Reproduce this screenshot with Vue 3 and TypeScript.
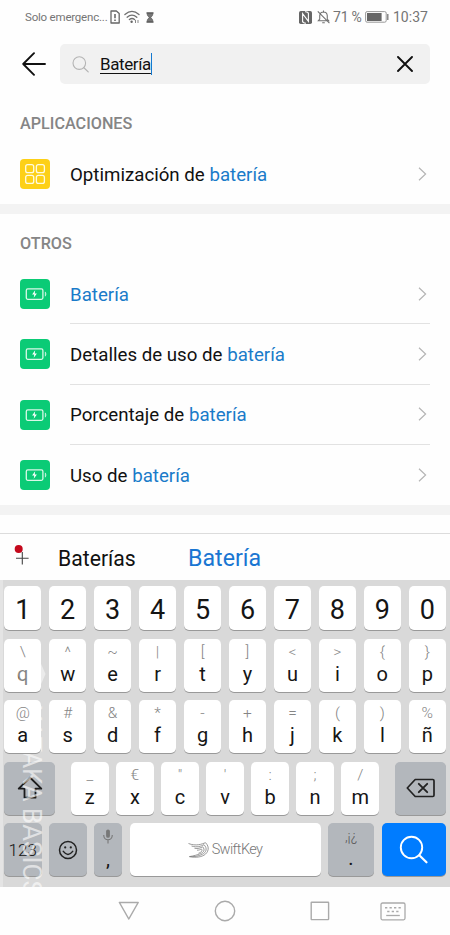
<script setup lang="ts">
interface Result {
  lead: string
  match: string
}
interface Key {
  hint: string
  label: string
}

const others: Result[] = [
  { lead: '', match: 'Batería' },
  { lead: 'Detalles de uso de ', match: 'batería' },
  { lead: 'Porcentaje de ', match: 'batería' },
  { lead: 'Uso de ', match: 'batería' },
]

const digits: string[] = '1234567890'.split('')

function makeRow(hints: string, labels: string): Key[] {
  return labels.split('').map((label, i) => ({ hint: hints[i], label }))
}

const topRow = makeRow('\\^~|[]<>{}', 'qwertyuiop')
const homeRow = makeRow('@#&*-+=()%', 'asdfghjklñ')
const bottomRow = makeRow('_€"\':;/', 'zxcvbnm')
</script>

<template>
  <div class="screen">
    <header class="status">
      <span class="carrier">Solo emergenc...</span>
      <svg class="sim" width="10" height="14" viewBox="0 0 10 14">
        <path d="M1 1h5.4L9.2 3.6V13H1z" fill="none" stroke="#666" stroke-width="1.3" stroke-linejoin="round" />
        <path d="M5 4v4.2M5 9.6v1.5" stroke="#555" stroke-width="1.4" />
      </svg>
      <svg class="wifi" width="16" height="14" viewBox="0 0 16 14">
        <g fill="none" stroke="#707070" stroke-width="1.3" stroke-linecap="round">
          <path d="M.9 4.6Q8-1.8 15 4.6M3.1 7.2Q8 3 12.8 7.2M5.4 9.5Q8 7.5 10.6 9.5" />
        </g>
        <circle cx="7.6" cy="11.7" r="1.2" fill="#666" />
        <path d="M11.5 10v3M14 10v3" stroke="#888" stroke-width="1" />
      </svg>
      <svg class="glass" width="8" height="11" viewBox="0 0 8 11">
        <path d="M.5 1h7M.5 10h7" stroke="#555" stroke-width="1.4" />
        <path d="M1.3 1.5h5.4v1.6L4.8 5.5l1.9 2.4v1.6H1.3V7.9l1.9-2.4-1.9-2.4z" fill="#777" stroke="#555" stroke-width=".7" />
      </svg>
      <span class="spacer"></span>
      <svg class="nfc" width="13" height="13" viewBox="0 0 13 13">
        <rect width="13" height="13" rx="1.8" fill="#666" />
        <path d="M3.6 11V2.600l5.800 7.800V2M6 .8q3.400-.2 3.400 2M3.600 10q0 2.200 3.400 2.200" fill="none" stroke="#fff" stroke-width="1.1" />
      </svg>
      <svg class="bell" width="13" height="14" viewBox="0 0 12 13">
        <g fill="none" stroke="#707070" stroke-width="1">
          <path d="M1.2 10h9.6L9.5 8.4V5.2Q9.2 2 6 1.9 2.8 2 2.5 5.2v3.2zM6 .5v1.3M4.8 11.8h2.4M.7 1.2l10.8 11" />
        </g>
      </svg>
      <span class="pct">71 %</span>
      <svg class="cell" width="24" height="12" viewBox="0 0 24 12">
        <rect x=".6" y=".6" width="20.6" height="10.6" rx="1.5" fill="none" stroke="#999" />
        <rect x="2" y="2" width="14.6" height="8" fill="#666" />
        <path d="M22.8 3v6" stroke="#777" stroke-width="1.3" />
      </svg>
      <span class="clock">10:37</span>
    </header>

    <div class="searchbar">
      <svg class="back" width="24" height="24" viewBox="0 0 24 24">
        <path d="M23 12H1.2M12 1.2 1.2 12 12 22.8" fill="none" stroke="#111" stroke-width="1.9" stroke-linecap="round" stroke-linejoin="round" />
      </svg>
      <div class="field">
        <svg class="lens" width="17" height="17" viewBox="0 0 17 17">
          <circle cx="7.3" cy="7.1" r="6.3" fill="none" stroke="#b4b4b4" stroke-width="1.1" />
          <path d="m11.9 11.7 4.3 4.2" stroke="#b4b4b4" stroke-width="1.2" stroke-linecap="round" />
        </svg>
        <span class="query">Batería</span>
        <span class="caret"></span>
        <span class="spacer"></span>
        <svg width="16" height="16" viewBox="0 0 16 16">
          <path d="m1 1 14 14M15 1 1 15" stroke="#111" stroke-width="1.9" stroke-linecap="round" />
        </svg>
      </div>
    </div>

    <main class="results">
      <section class="group apps">
        <h2>APLICACIONES</h2>
        <div class="item">
          <svg class="badge" width="30" height="30" viewBox="0 0 30 30">
            <rect width="30" height="30" rx="4" fill="#fdd017" />
            <g fill="none" stroke="#fffbe0" stroke-width="1.3">
              <rect x="5.7" y="5.7" width="8" height="8" rx="2" />
              <rect x="16.4" y="5.7" width="8" height="8" rx="2" />
              <rect x="5.7" y="16.4" width="8" height="8" rx="2" />
              <rect x="16.4" y="16.4" width="8" height="8" rx="2" />
            </g>
          </svg>
          <div class="row">
            <span class="name">Optimización de <b>batería</b></span>
            <svg width="9" height="14" viewBox="0 0 9 14"><path d="m1 .8 6.6 6.2L1 13.2" fill="none" stroke="#b5b5b5" stroke-width="1.2" /></svg>
          </div>
        </div>
      </section>
      <div class="band"></div>
      <section class="group">
        <h2>OTROS</h2>
        <div v-for="(item, i) in others" :key="i" class="item">
          <svg class="badge" width="30" height="30" viewBox="0 0 30 30">
            <rect width="30" height="30" rx="4" fill="#0bcb76" />
            <rect x="6.3" y="9.9" width="16.6" height="10.4" rx="1.5" fill="none" stroke="#d9f8e8" stroke-width="1.3" />
            <path d="M25.3 12.9q1.5 2.1 0 4.3z" fill="#d9f8e8" stroke="#d9f8e8" stroke-width=".6" />
            <path d="m15.2 11.3-3.1 4.3h2.2l-.6 3.2 3.2-4.4h-2.2z" fill="#fff" />
          </svg>
          <div class="row">
            <span class="name">{{ item.lead }}<b>{{ item.match }}</b></span>
            <svg width="9" height="14" viewBox="0 0 9 14"><path d="m1 .8 6.6 6.2L1 13.2" fill="none" stroke="#b5b5b5" stroke-width="1.2" /></svg>
          </div>
        </div>
      </section>
      <div class="band"></div>
    </main>

    <div class="suggestions">
      <svg class="plus" width="18" height="22" viewBox="0 0 18 22">
        <path d="M2 14.2h12.6M8.3 8v12.4" stroke="#444" stroke-width="1.1" />
        <circle cx="4.7" cy="5" r="4" fill="#c4081c" />
      </svg>
      <span class="alt">Baterías</span>
      <span class="main">Batería</span>
    </div>

    <div class="keyboard">
      <div class="keys digits">
        <div v-for="d in digits" :key="d" class="key digit">{{ d }}</div>
      </div>
      <div class="keys">
        <div v-for="k in topRow" :key="k.label" class="key">
          <span class="hint">{{ k.hint }}</span><span class="label">{{ k.label }}</span>
        </div>
      </div>
      <div class="keys home">
        <div v-for="k in homeRow" :key="k.label" class="key">
          <span class="hint">{{ k.hint }}</span><span class="label">{{ k.label }}</span>
        </div>
      </div>
      <div class="keys split">
        <div class="key dark wide">
          <svg width="26" height="24" viewBox="0 0 26 24">
            <path d="M13 1.5 1.7 12.7h5.8v9h11v-9h5.8z" fill="none" stroke="#1c1c1c" stroke-width="1.8" stroke-linejoin="round" />
          </svg>
        </div>
        <div class="letters">
          <div v-for="k in bottomRow" :key="k.label" class="key">
            <span class="hint">{{ k.hint }}</span><span class="label">{{ k.label }}</span>
          </div>
        </div>
        <div class="key dark wide">
          <svg width="30" height="20" viewBox="0 0 30 20">
            <path d="M9.2 1.5h17.6q1.2 0 1.2 1.2v14.6q0 1.2-1.2 1.2H9.2L1.3 10z" fill="none" stroke="#222" stroke-width="1.7" stroke-linejoin="round" />
            <path d="m12.8 5.8 8.4 8.4M21.2 5.8l-8.4 8.4" stroke="#222" stroke-width="1.9" stroke-linecap="round" />
          </svg>
        </div>
      </div>
      <div class="keys last">
        <div class="key dark mode">123</div>
        <div class="key dark">
          <svg width="20" height="20" viewBox="0 0 20 20">
            <g fill="none" stroke="#222" stroke-width="1.5" stroke-linecap="round">
              <circle cx="10" cy="10" r="8.5" />
              <path d="M5.3 11.4q4.7 6 9.4 0" />
            </g>
            <circle cx="7.2" cy="7.4" r="1.1" fill="#222" /><circle cx="12.8" cy="7.4" r="1.1" fill="#222" />
          </svg>
        </div>
        <div class="key dark comma">
          <svg width="10" height="15" viewBox="0 0 10 15">
            <rect x="3.1" y=".4" width="3.8" height="8.4" rx="1.9" fill="#777" />
            <path d="M.8 6v1q.5 3.6 4.2 3.8Q8.7 10.6 9.2 7V6M5 11v3.5" fill="none" stroke="#777" stroke-width="1.1" />
          </svg>
          <span class="label">,</span>
        </div>
        <div class="key space">
          <svg width="21" height="16" viewBox="0 0 21 16">
            <g fill="none" stroke="#808080" stroke-width=".8">
              <path d="M.5 1.500C8 4.500 14 2 17.500.7 22 5 20.500 10.500 16 13.200 11.500 15.700 6 15.500 1.500 14.600" />
              <path d="M3.500 4C9 5.800 13 4.200 16 2.700 19.800 6.500 18 10.500 14.500 12.200 10.500 14.400 6 14.800 1.500 14.600" />
              <path d="M6.500 6.300C10 7 12.500 5.900 14.700 4.800 17.500 8 15.500 10.500 12.500 11.600 9 13 6 13.800 1.500 14.600" />
              <path d="M9 8.200c1.800.1 3.200-.5 4.400-1.200C15 9 13 10.300 10.500 11.200" />
            </g>
          </svg>
          <span class="brand">SwiftKey</span>
        </div>
        <div class="key dark dot"><span class="hint">,¡¿</span><span class="label">.</span></div>
        <div class="key search">
          <svg width="30" height="30" viewBox="0 0 30 30">
            <circle cx="12.5" cy="12.5" r="10.7" fill="none" stroke="#fff" stroke-width="1.9" />
            <path d="m20.3 20.3 7.2 7" stroke="#fff" stroke-width="2.2" stroke-linecap="round" />
          </svg>
        </div>
      </div>
      <svg class="mark" width="29" height="36" viewBox="0 0 29 36">
        <path d="M5 1h16l7.500 17L21 35H5L.5 18z" fill="#fff" fill-opacity=".48" />
      </svg>
      <div class="watermark">XATAKA BASICS</div>
    </div>

    <nav class="navbar">
      <svg width="22" height="20" viewBox="0 0 22 20"><path d="M1.4 1.5h18.8L10.8 18z" fill="none" stroke="#aaa" stroke-width="1.5" stroke-linejoin="round" /></svg>
      <svg width="22" height="22" viewBox="0 0 22 22"><circle cx="11" cy="11" r="9.7" fill="none" stroke="#aaa" stroke-width="1.4" /></svg>
      <svg width="20" height="20" viewBox="0 0 20 20"><rect x="1.2" y="1.2" width="17.4" height="17.4" rx=".5" fill="none" stroke="#aaa" stroke-width="1.4" /></svg>
      <svg width="26" height="19" viewBox="0 0 26 19">
        <rect x="1" y="1" width="24" height="16.8" rx="1.5" fill="none" stroke="#aaa" stroke-width="1.3" />
        <path d="M5 5.7h16M7.2 9.5h12" stroke="#aaa" stroke-width="1.6" stroke-dasharray="2.3 2.2" />
        <path d="M6.2 13.5h13.6" stroke="#aaa" stroke-width="1.3" />
      </svg>
    </nav>
  </div>
</template>

<style>
body {
  margin: 0;
  background: #fff;
}
</style>

<style scoped>
.screen {
  width: 450px;
  height: 935px;
  display: flex;
  flex-direction: column;
  overflow: hidden;
  background: #fefefe;
  color: #111;
  font-family: Roboto, "Liberation Sans", sans-serif;
}
svg {
  display: block;
  flex: none;
}
.spacer {
  flex: 1;
}
.status {
  height: 34px;
  box-sizing: border-box;
  padding: 0 22px 0 25px;
  display: flex;
  align-items: center;
  color: #757575;
  font-size: 11.5px;
  white-space: nowrap;
}
.carrier {
  width: 85px;
  letter-spacing: -0.2px;
}
.wifi {
  margin-left: 4px;
}
.glass {
  margin-left: 6px;
}
.bell {
  margin: 0 3px 0 5px;
}
.pct,
.clock {
  font-size: 14px;
}
.pct {
  width: 32px;
  letter-spacing: -0.2px;
}
.clock {
  width: 35px;
  margin-left: 4px;
}
.searchbar {
  height: 60px;
  box-sizing: border-box;
  display: flex;
  align-items: center;
  padding: 0 20px 0 22px;
}
.field {
  flex: 1;
  height: 40px;
  box-sizing: border-box;
  margin-left: 14px;
  padding: 0 17px 0 12px;
  display: flex;
  align-items: center;
  border-radius: 5px;
  background: #f1f1f1;
}
.query {
  margin-left: 11px;
  font-size: 17px;
  letter-spacing: -0.4px;
  line-height: 22px;
  text-decoration: underline;
  text-decoration-thickness: 1px;
  text-underline-offset: 3px;
}
.caret {
  width: 1px;
  height: 22px;
  background: #1479d0;
}
.results {
  height: 439px;
}
.group {
  height: 291px;
}
.apps {
  height: 110px;
}
h2 {
  height: 50px;
  margin: 0;
  padding: 20px 0 0 20px;
  box-sizing: border-box;
  color: #858585;
  font-size: 16.2px;
  font-weight: 500;
  line-height: 20px;
}
.item {
  height: 60.3px;
  display: flex;
  align-items: center;
  padding: 0 20px;
}
.row {
  flex: 1;
  height: 100%;
  box-sizing: border-box;
  margin-left: 20px;
  padding-right: 3px;
  display: flex;
  align-items: center;
  justify-content: space-between;
  border-bottom: 1px solid #e2e2e2;
}
.item:last-child .row {
  border-bottom-color: transparent;
}
.name {
  padding-top: 2px;
  font-size: 18.7px;
  white-space: pre;
}
.name b {
  color: #1a7bc9;
  font-weight: 400;
}
.band {
  height: 10px;
  background: #f3f3f3;
}
.suggestions {
  height: 47px;
  box-sizing: border-box;
  border-top: 1px solid #dcdcdc;
  display: flex;
  align-items: center;
  padding: 2px 0 0 14px;
  white-space: nowrap;
}
.plus {
  margin-top: -7px;
}
.alt {
  width: 130px;
  margin-left: 26px;
  font-size: 21.2px;
}
.main {
  color: #1976d2;
  font-size: 23.2px;
}
.keyboard {
  position: relative;
  height: 307px;
  box-sizing: border-box;
  padding: 6px 4px 0;
  display: flex;
  flex-direction: column;
  gap: 8.5px;
  background: linear-gradient(to right, #e4e4e4 3px, #d9d9d9 3px);
}
.keys {
  height: 53px;
  flex: none;
  display: grid;
  grid-template-columns: repeat(10, 1fr);
  gap: 7.5px;
}
.keys.digits {
  height: 44px;
}
.keys.home {
  position: relative;
  z-index: 1;
}
.keys.split {
  grid-template-columns: 51px 1fr 51px;
  gap: 16px;
}
.letters {
  display: grid;
  grid-template-columns: repeat(7, 1fr);
  gap: 7.5px;
}
.keys.last {
  grid-template-columns: 37.5px 37.5px 28px 191px 46px 1fr;
}
.key {
  display: flex;
  flex-direction: column;
  align-items: center;
  justify-content: center;
  border-radius: 5px;
  background: #fff;
  box-shadow: 0 1px 0 #999;
  color: #151515;
}
.hint {
  height: 22px;
  margin-top: -4px;
  color: #858585;
  font-size: 15.5px;
  font-weight: 300;
  line-height: 22px;
}
.label {
  height: 23px;
  font-size: 20px;
  line-height: 23px;
}
.digit {
  padding-top: 4px;
  box-sizing: border-box;
  font-size: 27px;
}
.dark {
  background: #b3b7bc;
}
.mode {
  font-size: 17px;
  font-weight: 300;
}
.space {
  flex-direction: row;
  gap: 3px;
  color: #919191;
}
.brand {
  font-size: 14.5px;
  font-weight: 300;
  letter-spacing: -0.6px;
  color: #777;
}
.dot .hint {
  color: #555;
  font-size: 14px;
}
.comma .label {
  margin-top: 4px;
}
.search {
  background: #007cff;
}
.mark {
  position: absolute;
  left: 17px;
  top: 76px;
}
.watermark {
  position: absolute;
  left: 17px;
  top: 125px;
  line-height: 30px;
  writing-mode: vertical-rl;
  color: rgba(255, 255, 255, 0.6);
  font-size: 26px;
  white-space: nowrap;
}
.navbar {
  flex: 1;
  display: flex;
  align-items: center;
  padding: 0 0 0 118px;
}
.navbar svg:nth-child(2) {
  margin-left: 74px;
}
.navbar svg:nth-child(3) {
  margin-left: 74px;
}
.navbar svg:nth-child(4) {
  margin-left: 50px;
}
</style>
